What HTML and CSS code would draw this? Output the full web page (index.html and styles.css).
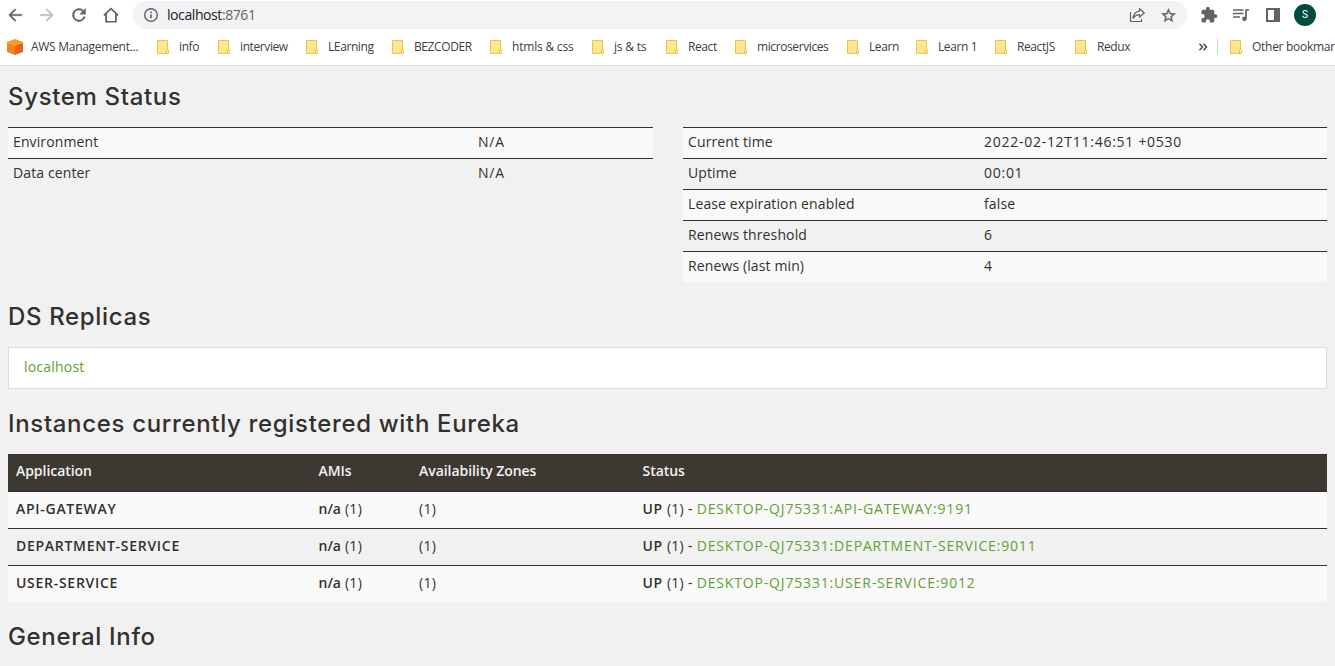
FILE: index.html
```html
<!DOCTYPE html>
<html lang="en">
<head>
<meta charset="utf-8">
<title>Eureka</title>
<link rel="stylesheet" href="styles.css">
</head>
<body>
<svg class="defs" width="0" height="0">
  <symbol id="folder" viewBox="0 0 14 16">
    <path d="M1.500 1.500h10v9.600l.5.300v3H1.500z" fill="#ffe694" stroke="#e8c64a"/>
    <rect x="10.500" y="10.500" width="2" height="4" rx=".8" fill="#fff0b0" stroke="#e8c02c"/>
  </symbol>
</svg>
<header class="browser">
  <div class="toolbar">
    <div class="nav">
      <svg class="icon" viewBox="0 0 24 24"><path fill="#5f6368" stroke="#5f6368" stroke-width=".5" d="M21 11H7.300l6.100-6.090L12 3.500 3.500 12l8.500 8.500 1.400-1.410L7.300 13H21v-2z"/></svg>
      <svg class="icon" viewBox="0 0 24 24"><path fill="#babcbe" stroke="#babcbe" stroke-width=".5" d="M12 3.500l-1.400 1.410L16.700 11H3v2h13.700l-6.100 6.090L12 20.500l8.500-8.500z"/></svg>
      <svg class="icon" viewBox="1 1 22 22"><path fill="#5f6368" d="M17.650 6.350A7.960 7.960 0 0 0 12 4a8 8 0 1 0 7.730 10h-2.080A6 6 0 1 1 12 6c1.660 0 3.140.69 4.220 1.780L13 11h7V4l-2.350 2.350z" stroke="#5f6368" stroke-width=".6"/></svg>
      <svg class="icon" viewBox="0 0 24 24"><path fill="none" stroke="#5f6368" stroke-width="2.300" d="M2.500 12.500 12 3.500l9.500 9M5.500 10.500V21h13V10.500"/></svg>
    </div>
    <div class="address">
      <svg class="info" viewBox="0 0 16 16"><circle cx="8" cy="8" r="6.300" fill="none" stroke="#5f6368" stroke-width="1.400"/><path d="M8 7.200v4M8 4.400v1.500" stroke="#5f6368" stroke-width="1.600"/></svg>
      <span class="url">localhost<span class="port">:8761</span></span>
      <svg class="share" viewBox="0 0 16 16"><path d="M1.500 5v9.500h11V12" fill="none" stroke="#5f6368" stroke-width="1.200"/><path d="M10.500 1.700 15.300 6l-4.800 4V7.700C7.800 7.700 5.800 8.800 4 11c.5-4 2.800-6.500 6.500-6.900z" fill="none" stroke="#5f6368" stroke-width="1.200" stroke-linejoin="round"/></svg>
      <svg class="star" viewBox="0 0 24 24"><path fill="#5f6368" stroke="#5f6368" stroke-width=".5" d="M22 9.240l-7.190-.62L12 2 9.190 8.630 2 9.240l5.460 4.730L5.820 21 12 17.270 18.180 21l-1.630-7.030L22 9.240zM12 15.400l-3.760 2.270 1-4.280-3.320-2.880 4.380-.38L12 6.100l1.710 4.040 4.380.38-3.320 2.880 1 4.280L12 15.400z"/></svg>
    </div>
    <div class="tools">
      <svg class="tool" viewBox="0 0 24 24"><path fill="#5f6368" d="M20.500 11H19V7a2 2 0 0 0-2-2h-4V3.500a2.500 2.500 0 0 0-5 0V5H4a2 2 0 0 0-2 2v3.800h1.500a2.700 2.700 0 0 1 0 5.400H2V20a2 2 0 0 0 2 2h3.800v-1.500a2.700 2.700 0 0 1 5.400 0V22H17a2 2 0 0 0 2-2v-4h1.500a2.500 2.500 0 0 0 0-5z"/></svg>
      <svg class="tool" viewBox="0 0 18 18"><path d="M1 4h10.500M1 7.500h10.500M1 11h7" stroke="#5f6368" stroke-width="1.500"/><path d="M14 12.500V4h3" fill="none" stroke="#5f6368" stroke-width="1.700"/><circle cx="12.500" cy="12.700" r="2.300" fill="#5f6368"/></svg>
      <svg class="tool" viewBox="0 0 18 18"><path fill="#5f6368" fill-rule="evenodd" d="M2 2h14v14H2zM4 4v10h6V4z"/></svg>
      <span class="avatar">S</span>
    </div>
  </div>
  <nav class="bookmarks">
    <a class="bm bm-aws"><svg class="cube" viewBox="0 0 16 16"><path d="M0 3.500 8 5.500V16l-8-3z" fill="#f58220"/><path d="M16 3.500 8 5.500V16l8-3z" fill="#e8601c"/><path d="M0 3 8 0l8 3v1L8 7 0 4z" fill="#ff9a2a"/></svg><span>AWS Management...</span></a>
    <a class="bm"><svg class="folder"><use href="#folder"/></svg><span>info</span></a>
    <a class="bm"><svg class="folder"><use href="#folder"/></svg><span>interview</span></a>
    <a class="bm"><svg class="folder"><use href="#folder"/></svg><span>LEarning</span></a>
    <a class="bm"><svg class="folder"><use href="#folder"/></svg><span>BEZCODER</span></a>
    <a class="bm bm-wide"><svg class="folder"><use href="#folder"/></svg><span>htmls &amp; css</span></a>
    <a class="bm bm-wide"><svg class="folder"><use href="#folder"/></svg><span>js &amp; ts</span></a>
    <a class="bm"><svg class="folder"><use href="#folder"/></svg><span>React</span></a>
    <a class="bm"><svg class="folder"><use href="#folder"/></svg><span>microservices</span></a>
    <a class="bm"><svg class="folder"><use href="#folder"/></svg><span>Learn</span></a>
    <a class="bm"><svg class="folder"><use href="#folder"/></svg><span>Learn 1</span></a>
    <a class="bm"><svg class="folder"><use href="#folder"/></svg><span>ReactJS</span></a>
    <a class="bm"><svg class="folder"><use href="#folder"/></svg><span>Redux</span></a>
    <svg class="more" viewBox="0 0 10 10"><path d="M1.500 1.800 4.500 5l-3 3.200M5.500 1.800 8.500 5l-3 3.200" fill="none" stroke="#45484c" stroke-width="1.500"/></svg>
    <a class="bm bm-other"><svg class="folder"><use href="#folder"/></svg><span>Other bookmark</span></a>
  </nav>
</header>
<main class="page">
  <h1 class="title">System Status</h1>
  <div class="status">
    <dl class="facts facts-env">
      <div class="fact"><dt>Environment</dt><dd class="caps">N/A</dd></div>
      <div class="fact"><dt>Data center</dt><dd class="caps">N/A</dd></div>
    </dl>
    <dl class="facts facts-run">
      <div class="fact"><dt>Current time</dt><dd class="stamp">2022-02-12T11:46:51 +0530</dd></div>
      <div class="fact"><dt>Uptime</dt><dd class="stamp">00:01</dd></div>
      <div class="fact"><dt>Lease expiration enabled</dt><dd>false</dd></div>
      <div class="fact"><dt>Renews threshold</dt><dd>6</dd></div>
      <div class="fact"><dt>Renews (last min)</dt><dd>4</dd></div>
    </dl>
  </div>
  <h1 class="title">DS Replicas</h1>
  <div class="replicas"><a class="link">localhost</a></div>
  <h1 class="title">Instances currently registered with Eureka</h1>
  <div class="instances">
    <div class="row head"><span>Application</span><span>AMIs</span><span>Availability Zones</span><span>Status</span></div>
    <div class="row"><b class="caps">API-GATEWAY</b><span><b>n/a</b> (1)</span><span>(1)</span><span><b class="caps">UP</b> (1) - <a class="link caps">DESKTOP-QJ75331:API-GATEWAY:9191</a></span></div>
    <div class="row"><b class="caps">DEPARTMENT-SERVICE</b><span><b>n/a</b> (1)</span><span>(1)</span><span><b class="caps">UP</b> (1) - <a class="link caps">DESKTOP-QJ75331:DEPARTMENT-SERVICE:9011</a></span></div>
    <div class="row"><b class="caps">USER-SERVICE</b><span><b>n/a</b> (1)</span><span>(1)</span><span><b class="caps">UP</b> (1) - <a class="link caps">DESKTOP-QJ75331:USER-SERVICE:9012</a></span></div>
  </div>
  <h1 class="title">General Info</h1>
</main>
</body>
</html>
```
FILE: styles.css
```css
* { box-sizing: border-box; }
body {
  margin: 0;
  height: 666px;
  overflow: hidden;
  background: #f1f1f1;
  color: #34302d;
  font: 14px/20px "Open Sans", "Noto Sans", sans-serif;
  letter-spacing: .12px;
}
svg { display: block; flex: none; }
.defs { position: absolute; }

.browser { height: 66px; background: #fff; border-bottom: 1px solid #dadce0; letter-spacing: 0; }
.toolbar { display: flex; align-items: center; height: 30px; padding-left: 6px; }
.nav { display: flex; gap: 14px; width: 127px; }
.icon { width: 18px; height: 18px; }
.address {
  display: flex;
  align-items: center;
  width: 1054px;
  height: 28px;
  padding: 0 10px;
  border-radius: 14px;
  background: #f1f3f4;
}
.info { width: 16px; height: 16px; }
.url { flex: 1; margin-left: 8px; color: #202124; letter-spacing: -.42px; }
.port { color: #5f6368; }
.share { width: 16px; height: 16px; margin-right: 15px; }
.star { width: 17px; height: 17px; }
.tools { display: flex; align-items: center; gap: 14px; padding-left: 13px; }
.tool { width: 18px; height: 18px; }
.avatar {
  width: 22px;
  height: 22px;
  margin-left: -2px;
  border-radius: 50%;
  background: #004d40;
  color: #fff;
  font: 10px/22px Roboto, sans-serif;
  text-align: center;
}

.bookmarks {
  display: grid;
  grid-template-columns: 149px 61px 88px 86px 98px 102px 74px 69px 112px 69px 79px 80px 124px 19px 118px;
  align-items: center;
  height: 34px;
  padding-left: 7px;
  color: #3c4043;
  font-size: 12px;
  line-height: 16px;
  letter-spacing: -.4px;
}
.bm { display: flex; align-items: center; white-space: nowrap; }
.bm-aws { gap: 8px; letter-spacing: -.28px; }
.bm-wide { letter-spacing: -.2px; }
.bm-other { border-left: 1px solid #cfd1d4; padding-left: 11px; letter-spacing: -.28px; }
.folder { width: 14px; height: 16px; margin-right: 9px; }
.cube { width: 16px; height: 16px; }
.more { width: 10px; height: 10px; }

.page { padding: 16px 8px 0; }
.title {
  margin: 0 0 15px;
  font: 500 24px/30px Inter, sans-serif;
  letter-spacing: .66px;
}
.status { display: grid; grid-template-columns: 645px 644px; gap: 30px; margin-bottom: 20px; }
.facts { margin: 0; }
.fact {
  display: grid;
  height: 31px;
  padding: 4px 5px 0;
  border-top: 1px solid #34302d;
}
.fact dd { margin: 0; }
.fact:nth-child(odd) { background: #f9f9f9; }
.facts-env .fact { grid-template-columns: 465px 1fr; }
.facts-run .fact { grid-template-columns: 296px 1fr; }
.caps { letter-spacing: .83px; }
.fact .stamp { letter-spacing: .73px; }

.replicas {
  height: 42px;
  margin-bottom: 20px;
  padding: 9px 15px;
  border: 1px solid #ddd;
  background: #fff;
}
.link { color: #5fa134; }
.replicas .link { letter-spacing: .2px; }

.instances { margin-bottom: 20px; }
.row {
  display: grid;
  grid-template-columns: 302.500px 100.500px 223.500px 1fr;
  height: 37px;
  padding: 7px 8px 0;
  border-top: 1px solid #34302d;
  letter-spacing: .3px;
}
.row:nth-child(even) { background: #f9f9f9; }
.row b { font-weight: 600; letter-spacing: 0; }
.row b.caps { letter-spacing: .72px; }
.head { padding-top: 6px; background: #3d3832; color: #f1f1f1; font-weight: 600; letter-spacing: -.05px; }
```
